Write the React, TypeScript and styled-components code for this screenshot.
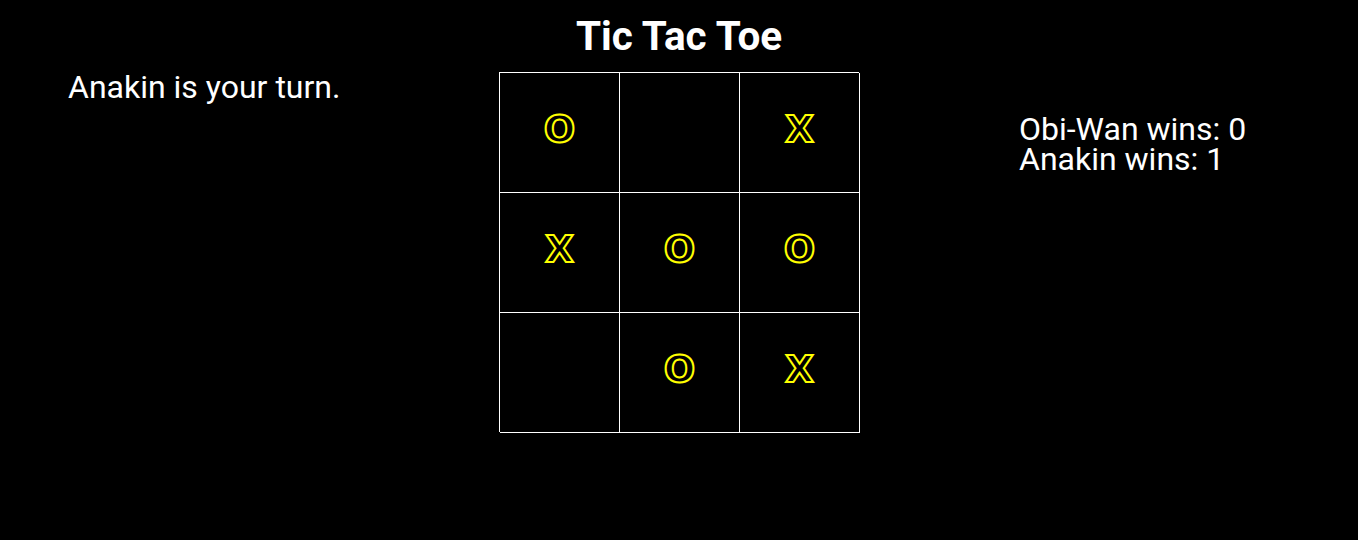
import React from "react";
import styled, { createGlobalStyle } from "styled-components";

const Global = createGlobalStyle`
  html, body { margin: 0; padding: 0; background: #000; }
  body { font-family: Roboto, "Liberation Sans", sans-serif; color: #fff; }
`;

const Page = styled.div`
  width: 1358px;
  height: 540px;
  background: #000;
`;

const Title = styled.h1`
  margin: 0;
  padding-top: 13px;
  height: 72px;
  box-sizing: border-box;
  text-align: center;
  font-size: 40.5px;
  font-weight: 700;
  line-height: 47px;
`;

const Main = styled.div`
  display: grid;
  grid-template-columns: 1fr 360px 1fr;
`;

const Status = styled.div`
  padding-left: 68px;
  font-size: 32px;
  line-height: 30px;
`;

const Scores = styled.div`
  padding-left: 160px;
  padding-top: 42px;
  font-size: 32px;
  line-height: 30px;
`;

const Board = styled.div`
  display: grid;
  grid-template-columns: repeat(3, 120px);
  grid-template-rows: repeat(3, 120px);
  border-left: 1px solid #fff;
  border-top: 1px solid #fff;
  width: 360px;
  height: 360px;
  box-sizing: border-box;
`;

const Cell = styled.div`
  border-right: 1px solid #fff;
  border-bottom: 1px solid #fff;
  display: flex;
  align-items: center;
  justify-content: center;
  padding-bottom: 6px;
  font-family: "DejaVu Sans", Verdana, sans-serif;
  font-size: 37px;
  font-weight: 700;
  color: #000;
  -webkit-text-stroke: 2px #ffff00;
`;

const cells = ["O", "", "X", "X", "O", "O", "", "O", "X"];

export default function App() {
  return (
    <Page>
      <Global />
      <Title>Tic Tac Toe</Title>
      <Main>
        <Status>Anakin is your turn.</Status>
        <Board>
          {cells.map((c, i) => (
            <Cell key={i}>{c}</Cell>
          ))}
        </Board>
        <Scores>
          <div>Obi-Wan wins: 0</div>
          <div>Anakin wins: 1</div>
        </Scores>
      </Main>
    </Page>
  );
}
